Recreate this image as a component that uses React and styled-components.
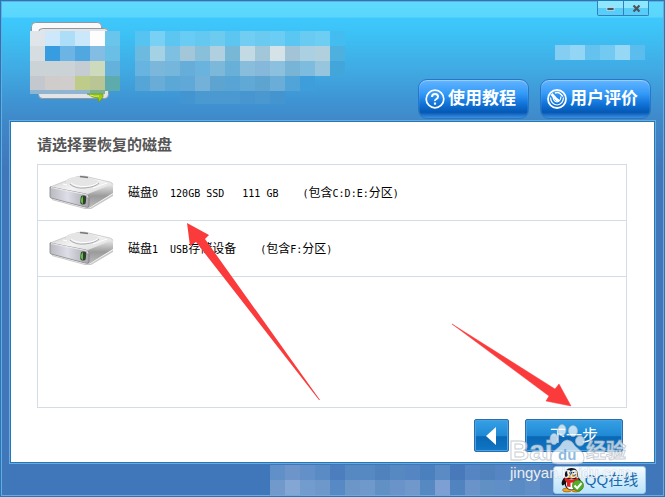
import React, {useState} from 'react';
import styled, {createGlobalStyle} from 'styled-components';

const CELL = 15;

const logoCells = [
    ['#dfe5e8','#cde8fb','#aeddf8','#cbe7fa','#fdfdfd','#69c5ec'],
    ['#d6dde0','#379de0','#6cb4e4','#51a8e0','#83bde4','#69bfe6'],
    ['#cbd3d7','#cbd3d7','#cbd3d7','#c5cdd2','#cddabb','#64b1dc'],
    ['#c3c8ce','#cfcccb','#d0cdcc','#bfcb89','#bac596','#5dabac'],
];

const titleCells = [
    ['#56c3f0','#78d1f4','#5cc6f0','#69ccf4','#64c8f0','#6ecbf0','#5cc6f0','#72cdf2','#6acaf0','#6ccdf4','#5ac7f3','#69cbf2','#6ecdf3','#43bdf0'],
    ['#6cbae0','#a5d1e4','#7dc0e1','#a3c6d8','#88c0da','#b0cfdf','#79b7d7','#c3d9e3','#a1c7d9','#d5e3e9','#a3c4d6','#abd0e1','#b0d0dd','#4db0de'],
    ['#68b4e0','#7ab7db','#74b6dc','#66aed9','#6ab3de','#7cb8da','#69b0d9','#88bddb','#85b8da','#8bc0de','#77b4d6','#7dbbdf','#98c5de','#43a6da'],
    ['#55a5d7','#68acd7','#5ba8d7','#5fa8d7','#73b1d8','#5da4d1','#58a5d5','#60a8d5','#5da4d1','#6aadd8','#51a4d7','#3d9edb'],
    [null,null,null,'#4395d1','#4b99d1','#4b99d1','#4b99d1','#4796cf','#4b98d0','#4494d0'],
];

const versionCells = [['#83cef2','#93d5f5','#65c2ef','#72c9f1','#95d7f5','#5bbdee']];

const footerCells = [
    ['#6090c7','#6e95ca','#6390c8','#5b8bc4','#4c7dbf','#5688c2','#5688c2','#5083be','#5688c2','#5585c2','#4b80bf','#5a8bc4','#4779bb','#5585c2','#5083be','#5585c2','#5688c2','#5585c2','#5083be'],
    ['#7199cc','#84a6d4','#729bce','#6f98ca','#5789c4','#6c95c8','#6f98cb','#6190c5','#6a93ca','#7098cb','#5688c2','#7d9fd3','#5183c0','#6a93ca','#6190c5','#5f8fc6','#5a8bc4','#5f8fc6','#5585c2'],
];

const disks = [
    {id: 0, number: '0', model: '120GB SSD', kind: '', size: '111 GB', letters: 'C:D:E:'},
    {id: 1, number: '1', model: 'USB', kind: '存储设备', size: '', letters: 'F:'},
];

const Cells = ({rows, x = 0, y = 0}) => (
    <g transform={`translate(${x} ${y})`} shapeRendering="crispEdges">
        {rows.map((row, r) => row.map((color, c) => color && (
            <rect key={`${r}-${c}`} x={c * CELL} y={r * CELL} width={CELL} height={CELL} fill={color} />
        )))}
    </g>
);

const BrandArt = () => (
    <svg width="320" height="84" viewBox="0 0 320 84" aria-hidden="true">
        <rect x="1.5" y="2.5" width="70" height="60" rx="4" fill="#f7f9fb" stroke="#92979e" />
        <rect x="8.5" y="8.5" width="70" height="70" rx="4" fill="#e2e4e7" stroke="#92979e" />
        <Cells rows={logoCells} y={11} />
        <Cells rows={titleCells} x={105} y={11} />
        <path d="M0 70h75v4H0z" fill="#8fb5d0" />
        <path d="M60 70h15v4H60z" fill="#7eb18e" />
        <path d="M57 74h16v3l-4 5-1-4q-6 0-10-4z" fill="#9ccc16" stroke="#6e9a12" strokeWidth=".7" />
        <path d="M60 75q5 2 9 1" fill="none" stroke="#dcf06a" />
    </svg>
);

const DriveIcon = () => (
    <svg width="66" height="38" viewBox="0 0 66 38" aria-hidden="true">
        <defs>
            <linearGradient id="driveTop" x1="0" y1="0" x2="1" y2="1">
                <stop offset="0" stopColor="#c9c9ca" />
                <stop offset=".5" stopColor="#f4f4f4" />
                <stop offset="1" stopColor="#d2d2d3" />
            </linearGradient>
            <linearGradient id="driveSide" x1="0" y1="0" x2="0" y2="1">
                <stop offset="0" stopColor="#e9e9e9" />
                <stop offset=".5" stopColor="#9b9b9c" />
                <stop offset="1" stopColor="#bdbdbd" />
            </linearGradient>
            <linearGradient id="driveFront">
                <stop offset="0" stopColor="#b9b9c0" />
                <stop offset=".45" stopColor="#dedee8" />
                <stop offset="1" stopColor="#a5a5ab" />
            </linearGradient>
        </defs>
        <path d="M3 27l33 9 5 0 23-14v2L42 37h-6L3 28z" fill="#c8c8c8" />
        <path d="M1 15L27 5q4-1 8-1l26 6q3 1 3 3L39 23z" fill="url(#driveTop)" stroke="#b8b8b9" strokeWidth=".6" />
        <path d="M39 22l25-10v9L40 36q-3 0-3-2z" fill="url(#driveSide)" />
        <path d="M1 15l36 7q3 1 3 4v8q-1 2-4 1L2 26q-1 0-1-2z" fill="url(#driveFront)" stroke="#818186" strokeWidth=".8" />
        <path d="M2 15.5l35 7q2 1 2 3" fill="none" stroke="#fff" strokeWidth=".8" />
        <ellipse cx="34" cy="10.5" rx="17" ry="5.5" fill="#e5e5e6" transform="rotate(5 34 10.5)" />
        <path d="M21 12q5 5 15 4 10-1 14-5" fill="none" stroke="#a8adb5" strokeWidth="1" />
        <path d="M22 11q5 4 14 3.5 9-.5 13-4" fill="none" stroke="#fff" strokeWidth="1" />
        <path d="M31 4.5l8 1" stroke="#77787a" strokeWidth="1.6" />
        <path d="M14 12l4 1M44 16l14-5" stroke="#fff" strokeWidth="1" />
        <rect x="31.5" y="23.5" width="5.5" height="9" rx="2" fill="#333b32" transform="rotate(5 34 28)" />
        <path d="M34 24v8q-2.5-1-2-4 0-3 2-4z" fill="#58c632" />
    </svg>
);

const HelpIcon = () => (
    <svg width="20" height="20" viewBox="0 0 20 20" fill="none" stroke="#fff" aria-hidden="true">
        <circle cx="10" cy="10" r="8.8" strokeWidth="1.7" />
        <path d="M7 8q0-3 3-3t3 2.7q0 1.3-1.6 2.3T10 12" strokeWidth="2" />
        <path d="M10 13.5v2.2" strokeWidth="2.2" />
    </svg>
);

const ReviewIcon = () => (
    <svg width="20" height="20" viewBox="0 0 20 20" fill="none" stroke="#fff" aria-hidden="true">
        <circle cx="10" cy="10" r="9" strokeWidth="1.8" />
        <path d="M3.5 8.5q.5 7 6.5 7.5 6-.5 6.5-7.5M6 7.5q.5 5 4 5.5 3.5-.5 4-5.5" strokeWidth="1.2" />
        <path d="M4.5 5l6 6.5" strokeWidth="2.6" />
        <path d="M8 4q3-1 5 .5l3 3" strokeWidth="1.5" />
        <circle cx="10.5" cy="11" r="1.6" fill="#fff" stroke="none" />
    </svg>
);

const PenguinIcon = () => (
    <svg width="24" height="26" viewBox="0 0 24 26" aria-hidden="true">
        <ellipse cx="6" cy="23" rx="4.5" ry="2" fill="#f5a31a" stroke="#6b3a05" strokeWidth=".5" />
        <ellipse cx="15" cy="23" rx="4.5" ry="2" fill="#f5a31a" stroke="#6b3a05" strokeWidth=".5" />
        <path d="M10.5 1C5.5 1 3.5 4.5 4 9.5 1 12.5-.5 17 1.5 18.5c1 .2 1.5-1 2-1.5 1 4 4 6 7 6s6-2 7-6c.5.5 1 1.7 2 1.5 2-1.5.5-6-2.5-9C17.5 4.5 15.5 1 10.5 1z" fill="#121212" />
        <ellipse cx="10.5" cy="17" rx="5.5" ry="5.5" fill="#fff" />
        <path d="M4 10.5q6.5 4 13 0l1 3q-4 2.5-8.5 2.3V20L6 19.5v-4L3.5 13z" fill="#e52020" />
        <ellipse cx="8" cy="5.5" rx="1.8" ry="2.5" fill="#fff" />
        <ellipse cx="13" cy="5.5" rx="1.8" ry="2.5" fill="#fff" />
        <circle cx="8.5" cy="6" r=".9" />
        <circle cx="12.5" cy="6" r=".9" />
        <ellipse cx="10.5" cy="9.5" rx="4.5" ry="1.5" fill="#f8a51b" />
        <circle cx="17" cy="18.5" r="5.5" fill="#54ad2b" stroke="#348018" strokeWidth=".7" />
        <path d="M13.5 18.5l2.7 2.7 4.3-5" fill="none" stroke="#fff" strokeWidth="2" />
    </svg>
);

const Pointers = () => (
    <Overlay width="665" height="497" viewBox="0 0 665 497" aria-hidden="true">
        <path d="M187 223l22 12-4 4 115 161h-1L196 242l-6 4z" fill="#fb3b3b" />
        <path d="M452 324l103 65 4-5 12 22-25-5 3-5z" fill="#fb3b3b" stroke="#fb3b3b" strokeWidth=".5" />
    </Overlay>
);

const Watermark = () => (
    <Stamp width="124" height="66" viewBox="0 0 124 66">
        <g fill="#fff" fillOpacity=".7" stroke="#a9b4bf" strokeOpacity=".65">
            <ellipse cx="46" cy="18" rx="4" ry="5.5" />
            <ellipse cx="54" cy="9" rx="4" ry="5.5" />
            <ellipse cx="65" cy="10" rx="4.5" ry="5.5" />
            <ellipse cx="72" cy="20" rx="4.5" ry="5" />
            <path d="M59 19q5 0 8 6l8 7q4 11-6 11H50q-10 0-6-11l8-7q3-6 7-6z" />
            <BigMark x="1" y="39">Bai</BigMark>
            <MidMark x="78" y="37">经验</MidMark>
        </g>
        <DuMark x="50" y="39">du</DuMark>
        <UrlMark x="2" y="57">jingyan.baidu.com</UrlMark>
    </Stamp>
);

const DiskText = ({disk}) => (
    <DiskLine>
        磁盘<Latin>{disk.number + '  ' + disk.model}</Latin>{disk.kind}
        {disk.size && <Latin>{'   ' + disk.size}</Latin>}
        <Latin>{'    ('}</Latin>包含<Latin>{disk.letters}</Latin>分区<Latin>)</Latin>
    </DiskLine>
);

const App = () => {
    const [selected, setSelected] = useState(null);
    return (
        <>
            <GlobalStyle />
            <Frame>
                <Header>
                    <Brand><BrandArt /></Brand>
                    <HeaderSide>
                        <WindowControls>
                            <ControlButton aria-label="最小化">
                                <svg width="9" height="9" viewBox="0 0 9 9"><path d="M1 3.5h7v3H1z" fill="#4c555c" stroke="#e8f8ff" strokeWidth=".6" /></svg>
                            </ControlButton>
                            <ControlButton aria-label="关闭">
                                <svg width="9" height="9" viewBox="0 0 9 9"><path d="M1.5 1.5l6 6m0-6l-6 6" stroke="#4c555c" strokeWidth="2.2" /></svg>
                            </ControlButton>
                        </WindowControls>
                        <Version width="90" height="15" viewBox="0 0 90 15" aria-hidden="true">
                            <Cells rows={versionCells} />
                        </Version>
                        <Links>
                            <PillButton><HelpIcon />使用教程</PillButton>
                            <PillButton><ReviewIcon />用户评价</PillButton>
                        </Links>
                    </HeaderSide>
                </Header>
                <Panel>
                    <Title>请选择要恢复的磁盘</Title>
                    <DiskList>
                        {disks.map(disk => (
                            <DiskItem key={disk.id}>
                                <DiskButton aria-pressed={selected === disk.id} onClick={() => setSelected(disk.id)}>
                                    <DriveIcon />
                                    <DiskText disk={disk} />
                                </DiskButton>
                            </DiskItem>
                        ))}
                    </DiskList>
                    <Actions>
                        <ActionButton $width={35} aria-label="上一步">
                            <svg width="14" height="18" viewBox="0 0 14 18"><path d="M11 0v18L1 9z" fill="#fff" /></svg>
                        </ActionButton>
                        <ActionButton $width={98}>下一步</ActionButton>
                    </Actions>
                </Panel>
                <Footer>
                    <svg width="283" height="30" viewBox="0 0 283 30" aria-hidden="true">
                        <Cells rows={footerCells} />
                    </svg>
                    <QQButton><PenguinIcon />QQ在线</QQButton>
                </Footer>
                <Pointers />
                <Watermark />
            </Frame>
        </>
    )
}

export default App;

const GlobalStyle = createGlobalStyle`
    * {
        box-sizing: border-box;
    }
    body {
        margin: 0;
        font-family: "Liberation Sans", "Noto Sans CJK SC", sans-serif;
    }
    button {
        margin: 0;
        padding: 0;
        font-family: inherit;
        cursor: pointer;
    }
    svg {
        display: block;
        flex: none;
    }
`;

const Frame = styled.div`
    position: relative;
    display: flex;
    flex-direction: column;
    min-height: 100vh;
    border: 1px solid #1f7ab8;
    box-shadow: inset 0 0 0 1px #6fa8dd;
    background: linear-gradient(#5fdaff 0, #5ad6fc 16px, #3ec8fd 17px, #3dc2f5 32px, #40a9e2 70px, #3f97d6 95px, #3f88c8 120px, #4076ba 170px);
`;

const Header = styled.header`
    display: flex;
    justify-content: space-between;
    height: 120px;
    padding-bottom: 2px;
`;

const Brand = styled.div`
    padding: 19px 0 0 29px;
`;

const HeaderSide = styled.div`
    display: flex;
    flex-direction: column;
    justify-content: space-between;
    align-items: flex-end;
    padding-right: 13px;
`;

const WindowControls = styled.div`
    display: flex;
    margin-right: 2px;
    border: 1px solid #2f80bb;
    border-top: 0;
    border-radius: 0 0 2px 2px;
`;

const ControlButton = styled.button`
    display: flex;
    align-items: center;
    justify-content: center;
    width: 25px;
    height: 14px;
    border: 0;
    background: linear-gradient(#8ee6ff 50%, #58cdf8 50%);
    & + & {
        border-left: 1px solid #2f80bb;
    }
`;

const Version = styled.svg`
    margin: 10px 6px 0 0;
`;

const Links = styled.div`
    display: flex;
    gap: 11px;
`;

const PillButton = styled.button`
    display: flex;
    align-items: center;
    gap: 3px;
    width: 111px;
    height: 40px;
    padding-left: 6px;
    border: 1px solid #2a76c6;
    border-radius: 9px;
    background: linear-gradient(#62b4ff, #359bf8 35%, #1377dc 60%, #0558b4 85%, #3c8fe0);
    box-shadow: inset 0 1px 1px #9bd0ff;
    color: #fff;
    font-size: 17px;
    font-weight: bold;
    line-height: 24px;
    white-space: nowrap;
`;

const Panel = styled.main`
    display: flex;
    flex: 1;
    flex-direction: column;
    margin: 0 9px;
    padding: 11px 27px 10px 26px;
    border: 1px solid #1f7ab8;
    outline: 1px solid #6fa8dd;
    background: #fff;
`;

const Title = styled.h1`
    margin: 0 0 8px;
    color: #555;
    font-size: 15px;
    line-height: 23px;
`;

const DiskList = styled.ul`
    flex: 1;
    margin: 0;
    padding: 0;
    border: 1px solid #d4dce8;
    list-style: none;
`;

const DiskItem = styled.li`
    border-bottom: 1px solid #d4dce8;
`;

const DiskButton = styled.button`
    display: flex;
    align-items: center;
    gap: 13px;
    width: 100%;
    height: 55px;
    padding: 0 11px 4px;
    border: 0;
    background: none;
    color: #000;
    text-align: left;
`;

const DiskLine = styled.span`
    padding-top: 6px;
    font-size: 12px;
    line-height: 16px;
    white-space: pre;
`;

const Latin = styled.span`
    font-family: "DejaVu Sans Mono", monospace;
    font-size: 10px;
`;

const Actions = styled.div`
    display: flex;
    justify-content: flex-end;
    gap: 16px;
    padding: 11px 4px 0 0;
`;

const ActionButton = styled.button`
    display: flex;
    align-items: center;
    justify-content: center;
    width: ${props => props.$width}px;
    height: 33px;
    border: 1px solid #2a6cae;
    border-radius: 2px;
    background: linear-gradient(#35a0e6, #2189d4 50%, #0a68b5 54%, #0f76c6);
    box-shadow: inset 0 0 0 1px #49a3e0;
    color: #fff;
    font-size: 16px;
    line-height: 24px;
`;

const Footer = styled.footer`
    display: flex;
    align-items: center;
    justify-content: flex-end;
    height: 33px;
    padding-right: 18px;
`;

const QQButton = styled.button`
    display: flex;
    align-items: center;
    justify-content: center;
    width: 93px;
    height: 28px;
    border: 1px solid #9cc8e8;
    border-radius: 3px;
    background: linear-gradient(#f6fbff, #d7eefc 50%, #b9e2fa);
    color: #1769ad;
    font-size: 15px;
    line-height: 20px;
`;

const Overlay = styled.svg`
    position: absolute;
    top: -1px;
    left: -1px;
    pointer-events: none;
`;

const Stamp = styled.svg`
    position: absolute;
    right: 32px;
    bottom: 9px;
    pointer-events: none;
`;

const BigMark = styled.text`
    font-size: 28px;
    font-weight: bold;
`;

const MidMark = styled.text`
    font-size: 20px;
    font-weight: bold;
`;

const DuMark = styled.text`
    fill: #5a9bd0;
    fill-opacity: 0.7;
    font-size: 15px;
    font-weight: bold;
`;

const UrlMark = styled.text`
    fill: #fff;
    fill-opacity: 0.85;
    stroke: #8fa3b8;
    stroke-opacity: 0.35;
    paint-order: stroke;
    font-size: 15px;
`;
